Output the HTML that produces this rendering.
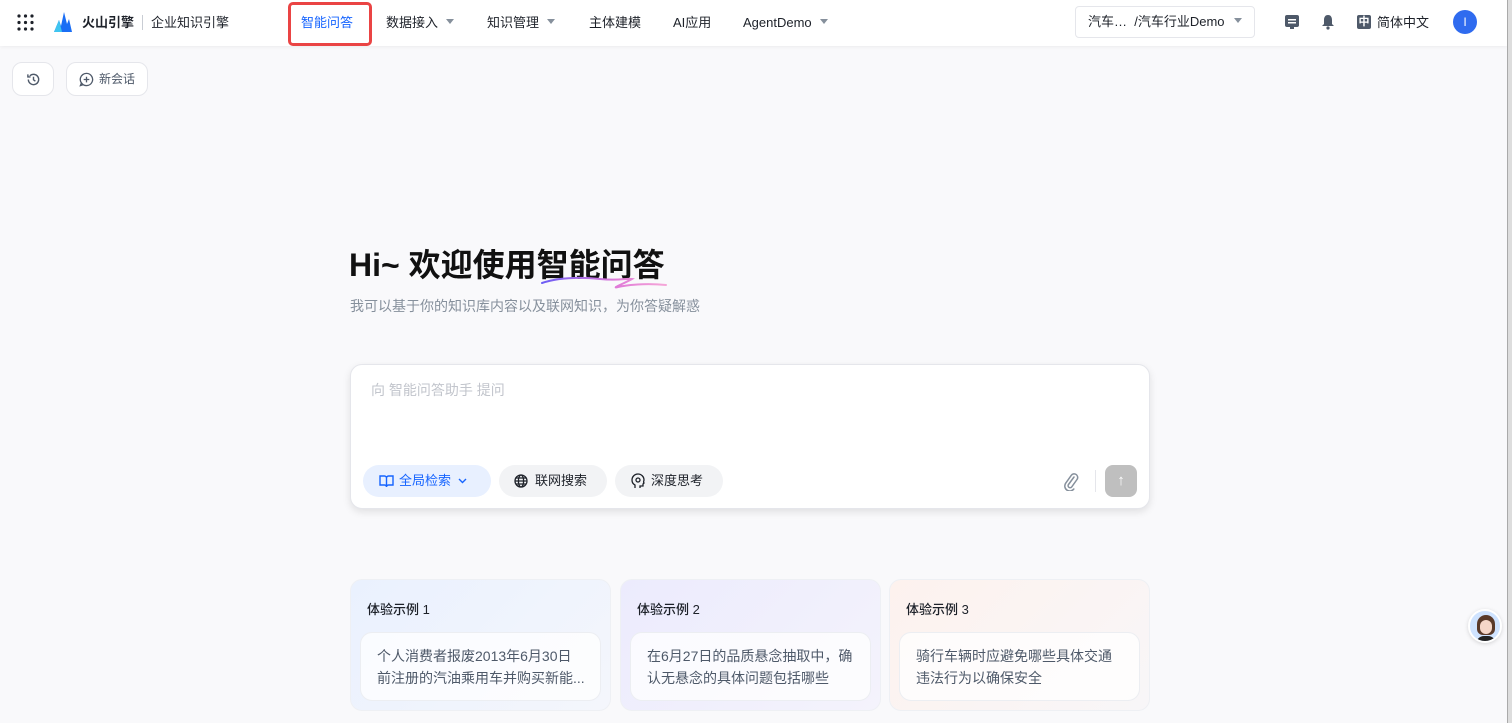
<!DOCTYPE html>
<html><head><meta charset="utf-8"><style>
*{box-sizing:border-box;margin:0;padding:0}
body{width:1512px;height:723px;overflow:hidden;background:#f9f9fb;font-family:"Liberation Sans","Noto Sans CJK SC",sans-serif;color:#1d2129;position:relative}
.top{position:absolute;left:0;top:0;width:1507px;height:46px;background:#fff;box-shadow:0 1px 4px rgba(0,0,0,.06)}
.a{position:absolute;white-space:nowrap}
.nav{font-size:13px;color:#1d2129;top:15px;line-height:16px;height:16px}
.caret{display:inline-block;width:0;height:0;border-left:4px solid transparent;border-right:4px solid transparent;border-top:5px solid #86909c;margin-left:8px;vertical-align:3px}
.btn{position:absolute;background:#fff;border:1px solid #e5e6eb;border-radius:10px}
.chip{position:absolute;top:465px;height:32px;border-radius:16px;background:#f2f3f5;font-size:13px;line-height:32px;padding-left:36px}
.card{position:absolute;top:579px;width:261px;height:132px;border-radius:12px;border:1px solid #eef0f4}
.card h4{position:absolute;left:16px;top:21px;font-size:13px;font-weight:500;line-height:18px}
.card .in{position:absolute;left:9px;top:52px;right:9px;height:69px;background:rgba(255,255,255,.75);border:1px solid #eceef2;border-radius:12px;padding:12px 8px 12px 16px;font-size:14px;line-height:22px;color:#4e5969;white-space:nowrap;overflow:hidden}
</style></head><body>
<div class="top">
<svg class="a" style="left:17px;top:14px" width="17" height="17" viewBox="0 0 17 17" fill="#1d2129"><circle cx="2" cy="2" r="1.6"/><circle cx="8.5" cy="2" r="1.6"/><circle cx="15" cy="2" r="1.6"/><circle cx="2" cy="8.5" r="1.6"/><circle cx="8.5" cy="8.5" r="1.6"/><circle cx="15" cy="8.5" r="1.6"/><circle cx="2" cy="15" r="1.6"/><circle cx="8.5" cy="15" r="1.6"/><circle cx="15" cy="15" r="1.6"/></svg>
<svg class="a" style="left:54px;top:12px" width="18" height="20" viewBox="0 0 18 20"><path d="M0 20 L5 8 L7 14 L10 0 L13 12 L15 7 L18 20Z" fill="#1a6ef5"/><path d="M0 20 L5 8 L8 20Z" fill="#3fc5f0"/></svg>
<div class="a nav" style="left:82px;font-weight:600">火山引擎</div>
<div class="a" style="left:142px;top:15px;width:1px;height:15px;background:#c9cdd4"></div>
<div class="a nav" style="left:151px">企业知识引擎</div>
<div class="a" style="left:288px;top:2px;width:84px;height:44px;border:3px solid #ea4444;border-radius:5px"></div>
<div class="a nav" style="left:301px;color:#1664ff">智能问答</div>
<div class="a nav" style="left:386px">数据接入<span class="caret"></span></div>
<div class="a nav" style="left:487px">知识管理<span class="caret"></span></div>
<div class="a nav" style="left:589px">主体建模</div>
<div class="a nav" style="left:673px">AI应用</div>
<div class="a nav" style="left:743px">AgentDemo<span class="caret"></span></div>
<div class="btn" style="left:1075px;top:6px;width:180px;height:32px;border-radius:4px;font-size:13px;line-height:30px;padding-left:12px">汽车…&nbsp; /汽车行业Demo<span class="caret" style="margin-left:9px"></span></div>
<svg class="a" style="left:1284px;top:14px" width="16" height="16" viewBox="0 0 16 16"><rect x="1" y="1" width="14" height="12" rx="2" fill="#4e5969"/><rect x="4" y="5" width="8" height="1.5" fill="#fff"/><rect x="4" y="8" width="8" height="1.5" fill="#fff"/><rect x="6" y="13" width="4" height="2" fill="#4e5969"/></svg>
<svg class="a" style="left:1321px;top:14px" width="14" height="16" viewBox="0 0 14 16"><path d="M7 1C4 1 3 3.5 3 6v4L1 12h12l-2-2V6c0-2.5-1-5-4-5z" fill="#4e5969"/><circle cx="7" cy="14" r="1.6" fill="#4e5969"/></svg>
<div class="a" style="left:1357px;top:15px;width:14px;height:14px;background:#4e5969;border-radius:2px;color:#fff;font-size:11px;line-height:14px;text-align:center;font-weight:bold">中</div>
<div class="a nav" style="left:1377px">简体中文</div>
<div class="a" style="left:1453px;top:10px;width:24px;height:24px;border-radius:50%;background:#2f6bef;color:#fff;font-size:12px;line-height:24px;text-align:center">I</div>
</div>
<div class="a" style="left:1507px;top:0;width:5px;height:723px;background:#ddd;border-left:1px solid #aaa"></div>
<div class="btn" style="left:12px;top:62px;width:42px;height:34px">
<svg style="position:absolute;left:13px;top:9px" width="15" height="15" viewBox="0 0 16 16" fill="none" stroke="#4e5969" stroke-width="1.5"><path d="M2.5 8a5.5 5.5 0 1 0 1.6-3.9"/><path d="M2 2.5v2.8h2.8"/><path d="M8 5v3.3l2 1.5"/></svg></div>
<div class="btn" style="left:66px;top:62px;width:82px;height:34px;font-size:12px;line-height:32px;padding-left:32px;color:#4e5969">新会话
<svg style="position:absolute;left:12px;top:9px" width="15" height="15" viewBox="0 0 16 16" fill="none" stroke="#4e5969" stroke-width="1.4"><path d="M8 1.5a6.5 6.5 0 1 1-5.4 10.1L1.5 14.5l2.9-1A6.5 6.5 0 0 1 8 1.5z"/><path d="M8 5v6M5 8h6"/></svg></div>
<div class="a" style="left:349px;top:243px;font-size:32px;line-height:44px;font-weight:600;color:#111">Hi~ 欢迎使用智能问答</div>
<svg class="a" style="left:540px;top:275px" width="130" height="16" viewBox="0 0 130 16" fill="none"><defs><linearGradient id="g" x1="0" x2="1"><stop offset="0" stop-color="#6b5cf5"/><stop offset=".6" stop-color="#e07ad8"/><stop offset="1" stop-color="#f5a7d8"/></linearGradient></defs><path d="M2 8C20 2 40 2 60 4S85 3 92 4C85 8 70 14 78 12S105 8 126 10" stroke="url(#g)" stroke-width="2" stroke-linecap="round"/></svg>
<div class="a" style="left:350px;top:297px;font-size:14px;line-height:18px;color:#86909c">我可以基于你的知识库内容以及联网知识，为你答疑解惑</div>
<div class="a" style="left:350px;top:364px;width:800px;height:145px;background:#fff;border:1px solid #e5e6eb;border-radius:12px;box-shadow:0 3px 8px rgba(0,0,0,.1)"></div>
<div class="a" style="left:371px;top:380px;font-size:14px;color:#c2c5cc">向 智能问答助手 提问</div>
<div class="chip" style="left:363px;width:128px;background:#e8f0ff;color:#1664ff">全局检索<svg style="margin-left:7px;vertical-align:1px" width="9" height="6" viewBox="0 0 9 6" fill="none" stroke="#1664ff" stroke-width="1.4"><path d="M1 1l3.5 3.5L8 1"/></svg>
<svg style="position:absolute;left:16px;top:9px" width="15" height="14" viewBox="0 0 15 14" fill="none" stroke="#1664ff" stroke-width="1.4"><path d="M1 2h4.5a2 2 0 0 1 2 2v9a2 2 0 0 0-2-2H1zM14 2H9.5a2 2 0 0 0-2 2v9a2 2 0 0 1 2-2H14z"/></svg></div>
<div class="chip" style="left:499px;width:108px">联网搜索
<svg style="position:absolute;left:15px;top:9px" width="14" height="14" viewBox="0 0 14 14" fill="none" stroke="#1d2129" stroke-width="1.3"><circle cx="7" cy="7" r="6"/><ellipse cx="7" cy="7" rx="2.6" ry="6"/><path d="M1 7h12M2 4h10M2 10h10"/></svg></div>
<div class="chip" style="left:615px;width:108px">深度思考
<svg style="position:absolute;left:16px;top:8px" width="14" height="16" viewBox="0 0 14 16" fill="none" stroke="#1d2129" stroke-width="1.3"><path d="M4 15v-3C2 11 1 9 1 7a6 6 0 0 1 12 0c0 1-1 2 0 3l-1 1v2H9v2"/><circle cx="7" cy="7" r="2"/></svg></div>
<svg class="a" style="left:1063px;top:471px" width="16" height="20" viewBox="0 0 16 20" fill="none" stroke="#86909c" stroke-width="1.5" stroke-linecap="round"><path d="M11 6l-5.5 7.5a2 2 0 0 0 3.2 2.4L14 8.5a3.5 3.5 0 0 0-5.7-4.2L2.8 12a5 5 0 0 0 8 6"/></svg>
<div class="a" style="left:1095px;top:470px;width:1px;height:22px;background:#e5e6eb"></div>
<div class="a" style="left:1105px;top:465px;width:32px;height:32px;border-radius:8px;background:#bfbfbf;color:#fff;text-align:center;line-height:32px;font-size:15px">↑</div>
<div class="card" style="left:350px;background:linear-gradient(135deg,#eaf1fe,#f4f6fc)"><h4>体验示例 1</h4><div class="in">个人消费者报废2013年6月30日<br>前注册的汽油乘用车并购买新能...</div></div>
<div class="card" style="left:620px;background:linear-gradient(135deg,#ecebfd,#f4f3fc)"><h4>体验示例 2</h4><div class="in">在6月27日的品质悬念抽取中，确<br>认无悬念的具体问题包括哪些</div></div>
<div class="card" style="left:889px;background:linear-gradient(135deg,#fdf2ee,#f8f6f8)"><h4>体验示例 3</h4><div class="in">骑行车辆时应避免哪些具体交通<br>违法行为以确保安全</div></div>
<div class="a" style="left:1468px;top:609px;width:34px;height:34px;border-radius:50%;background:#cfe3ff;border:2px solid #fff;box-shadow:0 1px 4px rgba(0,0,0,.15);overflow:hidden"><div style="position:absolute;left:7px;top:4px;width:18px;height:20px;border-radius:9px 9px 6px 6px;background:#5a3a2a"></div><div style="position:absolute;left:10px;top:9px;width:12px;height:14px;border-radius:6px;background:#f5d6c8"></div><div style="position:absolute;left:6px;top:25px;width:20px;height:10px;border-radius:8px 8px 0 0;background:#222"></div></div>
</body></html>
